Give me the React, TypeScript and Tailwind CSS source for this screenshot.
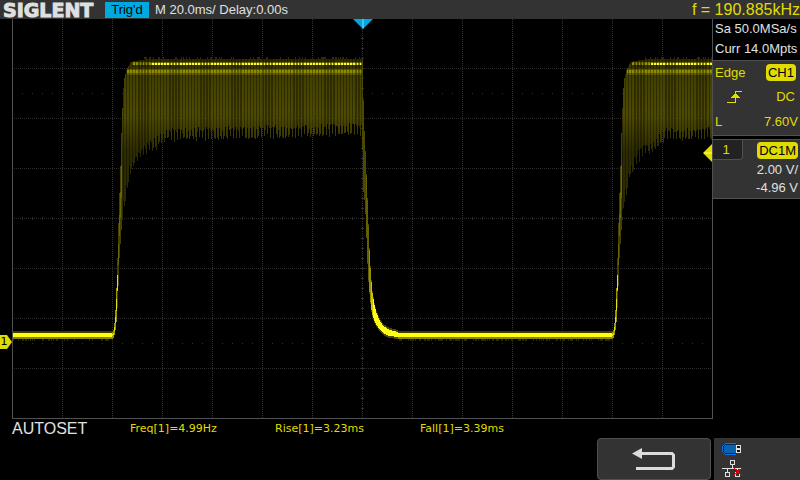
import React from "react";

type Point = [x: number, top: number, bottom: number];

// Envelope of the rising edge, x counted from the edge itself
const RISE: Point[] = [
  [0, 314, 320],
  [1, 312, 320],
  [2, 305, 317],
  [3, 292, 312],
  [4, 270, 304],
  [5, 240, 290],
  [6, 205, 268],
  [7, 175, 240],
  [8, 148, 226],
  [9, 115, 212],
  [10, 90, 202],
  [11, 70, 195],
  [12, 60, 188],
  [14, 52, 178],
  [16, 48, 166],
  [18, 44, 158],
  [22, 43, 150],
  [28, 42, 144],
  [36, 41, 137],
  [44, 41, 132],
  [52, 41, 124],
  [90, 41, 123],
  [250, 41, 119],
];

// Envelope of the falling edge
const FALL: Point[] = [
  [0, 44, 130],
  [1, 84, 172],
  [2, 115, 180],
  [3, 135, 194],
  [4, 158, 218],
  [5, 182, 244],
  [6, 208, 262],
  [7, 232, 274],
  [8, 250, 284],
  [9, 264, 292],
  [10, 275, 297],
  [12, 287, 303],
  [14, 295, 307],
  [17, 302, 311],
  [21, 308, 315],
  [27, 312, 318],
  [36, 314, 319],
];

const lookup = (table: Point[], x: number): [number, number] => {
  const i = table.findIndex((p) => p[0] >= x);
  if (i <= 0) return [table[0][1], table[0][2]];
  const a = table[i - 1];
  const b = table[i];
  const t = (x - a[0]) / (b[0] - a[0]);
  return [Math.round(a[1] + (b[1] - a[1]) * t), Math.round(a[2] + (b[2] - a[2]) * t)];
};

const noise = (n: number) => {
  const v = Math.sin(n * 12.9898) * 43758.5453;
  return v - Math.floor(v);
};

const VERTICALS = Array.from({ length: 13 }, (_, i) => (i + 1) * 50);
const HORIZONTALS = Array.from({ length: 7 }, (_, i) => (i + 1) * 50);
const TICKS_X = Array.from({ length: 69 }, (_, i) => (i + 1) * 10);
const TICKS_Y = Array.from({ length: 39 }, (_, i) => (i + 1) * 10);

const Graticule: React.FC = () => (
  <g fill="#303030">
    {VERTICALS.map((x) => (
      <line key={x} x1={x + 0.5} x2={x + 0.5} y1={1} y2={400} stroke="#303030" strokeDasharray="1 1" />
    ))}
    {HORIZONTALS.map((y) => (
      <line key={y} x1={2} x2={700} y1={y + 0.5} y2={y + 0.5} stroke="#2b2b2b" strokeDasharray="1 1" />
    ))}
    {TICKS_X.map((x) => (
      <g key={x}>
        <rect x={x} y={199} width={1} height={3} />
        <rect x={x} y={75} width={1} height={1} />
        <rect x={x} y={325} width={1} height={1} />
      </g>
    ))}
    {TICKS_Y.map((y) => (
      <rect key={y} x={349} y={y} width={3} height={1} />
    ))}
  </g>
);

// The upper half of the square wave, filled by the fast ripple
const Burst: React.FC<{ start: number; end: number }> = ({ start, end }) => {
  const columns: React.ReactNode[] = [];
  for (let x = start; x < end; x++) {
    const dx = x - start;
    const phase = Math.sin((x * 2 * Math.PI) / 3.1);
    const [top, low] = lookup(RISE, dx);
    if (dx < 10) {
      columns.push(
        <rect key={x} x={x} y={top} width={1} height={low - top} fill={dx < 5 ? "#9a9400" : "#454200"} />,
        <rect
          key={`c${x}`}
          x={x}
          y={top + (low - top) / 3}
          width={1}
          height={(low - top) / 3}
          fill={dx < 6 ? "#e4e010" : "#6a6600"}
        />
      );
      continue;
    }
    const bottom = low - (phase > 0 ? 0 : 9) - Math.round(noise(x) * 5);
    const lit = phase > -0.2;
    columns.push(
      <g key={x}>
        <rect x={x} y={top} width={1} height={bottom - top} fill="url(#ripple)" opacity={lit ? 1 : 0.65} />
        {dx > 14 && (
          <>
            <rect x={x} y={51} width={1} height={6} fill={lit ? "#5e5b00" : "#474400"} />
            <rect x={x} y={52} width={1} height={3} fill={lit ? "#8f8a00" : "#5e5a00"} />
          </>
        )}
        {dx > 19 && <rect x={x} y={44} width={1} height={3} fill={lit ? "#787300" : "#4a4700"} />}
        {dx > 19 && (
          <rect x={x} y={45} width={1} height={2} fill={lit ? (dx > 38 ? "#fffc20" : "#989300") : dx > 38 ? "#827d00" : "#4d4a00"} />
        )}
        {noise(x + 9) > 0.75 && dx > 30 && <rect x={x} y={39} width={1} height={2} fill="#2e2c00" />}
      </g>
    );
  }
  return <>{columns}</>;
};

const Decay: React.FC<{ start: number }> = ({ start }) => (
  <>
    {Array.from({ length: 36 }, (_, dx) => {
      const [top, bottom] = lookup(FALL, dx);
      const fill = dx < 4 ? "#4d4a00" : dx < 7 ? "#646000" : dx < 9 ? "#969100" : dx < 11 ? "#ccc700" : "#ffff14";
      return (
        <g key={dx}>
          <rect x={start + dx} y={top - 2} width={1} height={bottom - top + 4} fill="#4a4700" />
          <rect x={start + dx} y={top} width={1} height={bottom - top} fill={fill} />
        </g>
      );
    })}
  </>
);

const Baseline: React.FC<{ start: number; end: number }> = ({ start, end }) => (
  <>
    <rect x={start} y={313} width={end - start} height={8} fill="#3f3c00" />
    <rect x={start} y={319} width={end - start} height={2} fill="#8a8500" />
    <rect x={start} y={315} width={end - start} height={4} fill="#ffff10" />
    {Array.from({ length: end - start }, (_, i) =>
      noise(start + i) > 0.6 ? <rect key={i} x={start + i} y={321} width={1} height={2} fill="#2b2900" /> : null
    )}
  </>
);

const Plot: React.FC = () => (
  <div className="relative h-[400px] border-x border-b border-[#505050]">
    <svg
      className="block h-full w-full"
      viewBox="1 1 699 399"
      preserveAspectRatio="none"
      shapeRendering="crispEdges"
      role="img"
      aria-label="Channel 1 waveform"
    >
      <defs>
        <linearGradient id="ripple" gradientUnits="userSpaceOnUse" x1="0" y1="41" x2="0" y2="175">
          <stop offset="0" stopColor="#302e00" />
          <stop offset="0.15" stopColor="#454200" />
          <stop offset="0.42" stopColor="#4d4a00" />
          <stop offset="0.54" stopColor="#3f3c00" />
          <stop offset="0.7" stopColor="#2c2a00" />
          <stop offset="1" stopColor="#2c2a00" />
        </linearGradient>
      </defs>
      <Graticule />
      <Baseline start={1} end={101} />
      <Burst start={100} end={351} />
      <Decay start={350} />
      <Baseline start={386} end={601} />
      <Burst start={600} end={700} />
    </svg>

    {/* Trigger position */}
    <svg className="absolute left-1/2 top-0 h-[10px] w-5 -translate-x-1/2" viewBox="0 0 20 10">
      <path d="M0 0h20L10 10z" fill="#00a8e0" />
      <path d="M10 0v9" stroke="#8adcff" />
    </svg>

    {/* Trigger level */}
    <svg className="absolute right-0 top-[125px] h-[18px] w-[9px]" viewBox="0 0 9 18">
      <path d="M9 0v18L0 9z" fill="#e0dc00" />
      <path d="M1 9h8" stroke="#ffff60" />
    </svg>

    {/* Channel offset */}
    <div className="absolute -left-[13px] top-[316px] h-[14px] w-3">
      <svg className="absolute inset-0 h-full w-full" viewBox="0 0 12 14">
        <path d="M0 0h7l5 7-5 7H0z" fill="#e0dc00" />
      </svg>
      <span className="relative block w-2 text-center font-['DejaVu_Sans'] text-[11px] leading-[14px] text-black">1</span>
    </div>
  </div>
);

const EdgeIcon: React.FC = () => (
  <svg className="h-3 w-4" viewBox="0 0 16 12" shapeRendering="crispEdges" aria-label="Rising edge">
    <path d="M0 11.5h8.5V.5H15" fill="none" stroke="#e0dc00" />
    <path d="M8 2h1v1h1v1h1v1h1v1h1v1H4V6h1V5h1V4h1V3h1z" fill="#e0dc00" />
  </svg>
);

const BackIcon: React.FC = () => (
  <svg className="h-6 w-11" viewBox="0 0 44 24">
    <path d="M9 6.5h31l1.500 1.500v12L40 21.500H4" fill="none" stroke="#dcdcdc" strokeWidth="3" />
    <path d="M0 6.500L10 1v11z" fill="#dcdcdc" />
  </svg>
);

const UsbIcon: React.FC = () => (
  <svg className="h-3 w-5" viewBox="0 0 20 12" shapeRendering="crispEdges" aria-label="USB drive">
    <path d="M14 .5H3.500L.5 3.500v5l3 3H14" fill="#002a60" stroke="#0a6cf0" />
    <path d="M3 2h11v8H3L2 8V4z" fill="#0864ac" />
    <path d="M14 2h5v8h-5z" fill="#e0e0e0" />
    <path d="M15 3h3v2h-3zM15 7h3v2h-3z" fill="#111" />
  </svg>
);

const LanIcon: React.FC = () => (
  <svg className="h-[18px] w-[22px]" viewBox="0 0 22 18" shapeRendering="crispEdges" aria-label="Network disconnected">
    <path
      d="M8.500 1.500h4v4h-4zM10.500 6v3M0 9.500h20M5.500 10v3M15.500 10v3M3.500 13.500h4v4h-4zM13.500 13.500h4v4h-4z"
      fill="none"
      stroke="#e0e0e0"
    />
    <path d="M11 8l10 9M21 8l-10 9" stroke="#e00000" strokeWidth="1" />
  </svg>
);

const App: React.FC = () => {
  return (
    <div className="flex min-h-screen flex-col bg-black font-['Liberation_Sans',sans-serif] text-[13px] leading-[18px] text-[#e0e0e0]">
      {/* Status bar */}
      <header className="flex h-[19px] items-center bg-[#333333] pl-[3px]">
        <h1 className="w-[102px] font-['DejaVu_Sans',sans-serif] text-[19px] font-bold leading-[22px] [-webkit-text-stroke:1px_#e0e0e0]">
          SIGLENT
        </h1>
        <span className="h-4 w-11 bg-[#00a8e0] text-center leading-4 text-black">Trig'd</span>
        <span className="ml-[6px]">M 20.0ms/ Delay:0.00s</span>
        <span className="ml-auto text-base leading-[18px] text-[#e0dc00]">f = 190.885kHz</span>
      </header>

      <div className="flex">
        <main className="min-w-0 flex-1 pl-3">
          <Plot />
        </main>

        <aside className="w-[87px] shrink-0">
          <div className="flex h-[41px] flex-col pl-[2px] leading-5">
            <p>Sa 50.0MSa/s</p>
            <p>Curr 14.0Mpts</p>
          </div>

          {/* Trigger */}
          <section className="h-[76px] border-y border-[#505050] bg-[#333333] pl-[2px] pr-[2px] text-[#e0dc00]">
            <div className="flex h-[23px] items-center justify-between pr-[2px]">
              <span>Edge</span>
              <span className="rounded bg-[#e0dc00] px-[2px] leading-[17px] text-black">CH1</span>
            </div>
            <div className="flex h-[25px] items-center justify-between pl-3 pr-[3px]">
              <EdgeIcon />
              <span>DC</span>
            </div>
            <div className="flex h-[25px] items-center justify-between">
              <span>L</span>
              <span>7.60V</span>
            </div>
          </section>

          {/* Channel 1 */}
          <section className="mt-[3px] h-[60px] border-y border-[#505050] bg-[#333333] text-right">
            <div className="flex h-[21px] items-start justify-between">
              <span className="h-5 w-[30px] rounded-br border-b border-r border-[#505050] bg-[#222222] pr-[3px] text-center leading-5 text-[#e0dc00]">
                1
              </span>
              <span className="mr-[2px] mt-[2px] rounded bg-[#e0dc00] px-[2px] leading-[17px] text-black">DC1M</span>
            </div>
            <p className="pr-[2px]">2.00 V/</p>
            <p className="pr-[2px]">-4.96 V</p>
          </section>
        </aside>
      </div>

      {/* Measurements */}
      <div className="flex h-5 items-center pl-3">
        <span className="w-[118px] text-base leading-5">AUTOSET</span>
        <div className="grid grid-cols-[repeat(3,145px)] font-['DejaVu_Sans',sans-serif] text-[11px] text-[#e0dc00]">
          <span>Freq[1]=4.99Hz</span>
          <span>Rise[1]=3.23ms</span>
          <span>Fall[1]=3.39ms</span>
        </div>
      </div>

      {/* Soft keys */}
      <footer className="-mt-px flex h-[42px] justify-end gap-[3px]">
        <button
          type="button"
          aria-label="Back"
          className="flex w-[114px] items-center justify-center rounded border border-[#505050] bg-[#333333]"
        >
          <BackIcon />
        </button>
        <div className="flex w-[86px] flex-col gap-1 bg-[#333333] pl-2 pt-[5px]">
          <UsbIcon />
          <LanIcon />
        </div>
      </footer>
    </div>
  );
};

export default App;
